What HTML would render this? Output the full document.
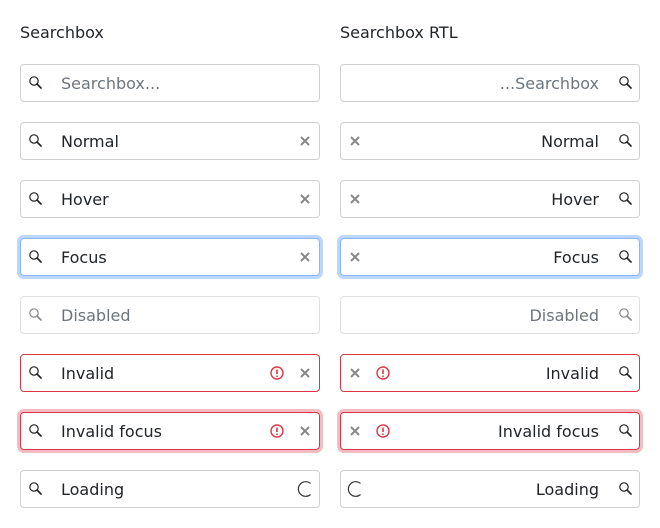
<!DOCTYPE html>
<html><head><meta charset="utf-8"><style>
body{margin:0;width:660px;height:528px;background:#fff;font-family:"DejaVu Sans","Liberation Sans",sans-serif;color:#212529;position:relative;overflow:hidden}
.t{position:absolute;top:23px;font-size:16px;line-height:20px}
.b{position:absolute;width:298px;height:36px;border:1px solid #ced0d4;border-radius:4px;box-sizing:content-box}
.b span.tx{position:absolute;top:1px;line-height:36px;font-size:16px}
.l .tx{left:40px}.r .tx{right:40px}
.ph{color:#6c757d}
.dis{color:#6c757d}.dis.b{border-color:#dde0e3}
.foc{border-color:#86b7fe;box-shadow:0 0 0 3px #bcd6fd}
.inv{border-color:#dc3545}
.invf{border-color:#dc3545;box-shadow:0 0 0 3px #f4bcc2}
svg{position:absolute;top:10px}
</style></head><body>
<div class="t" style="left:20px">Searchbox</div>
<div class="t" style="left:340px">Searchbox RTL</div>

<svg width="0" height="0" style="position:absolute">
<defs>
<g id="s"><circle cx="6" cy="6" r="4.2" fill="none" stroke="#222" stroke-width="1.2"/><path d="M9 9l4 4" stroke="#222" stroke-width="1.6" stroke-linecap="round"/></g>
<g id="sd"><circle cx="6" cy="6" r="4.2" fill="none" stroke="#888" stroke-width="1.2"/><path d="M9 9l4 4" stroke="#888" stroke-width="1.6" stroke-linecap="round"/></g>
<g id="x"><path d="M3 3l8 8M11 3l-8 8" stroke="#888" stroke-width="2"/></g>
<g id="e"><circle cx="7" cy="7" r="6" fill="none" stroke="#dc3545" stroke-width="1.4"/><path d="M7 3.5v4.5" stroke="#dc3545" stroke-width="1.6"/><circle cx="7" cy="10.3" r="0.9" fill="#dc3545"/></g>
<g id="sp"><path d="M14.5 3.5A7.3 7.3 0 1 0 14.5 14.5" fill="none" stroke="#333" stroke-width="1.2"/></g>
</defs></svg>

<!-- left column -->
<div class="b l" style="left:20px;top:64px"><svg width="14" height="14" style="left:7px"><use href="#s"/></svg><span class="tx ph">Searchbox...</span></div>
<div class="b l" style="left:20px;top:122px"><svg width="14" height="14" style="left:7px"><use href="#s"/></svg><span class="tx">Normal</span><svg width="14" height="14" style="left:277px;top:11px"><use href="#x"/></svg></div>
<div class="b l" style="left:20px;top:180px"><svg width="14" height="14" style="left:7px"><use href="#s"/></svg><span class="tx">Hover</span><svg width="14" height="14" style="left:277px;top:11px"><use href="#x"/></svg></div>
<div class="b l foc" style="left:20px;top:238px"><svg width="14" height="14" style="left:7px"><use href="#s"/></svg><span class="tx">Focus</span><svg width="14" height="14" style="left:277px;top:11px"><use href="#x"/></svg></div>
<div class="b l dis" style="left:20px;top:296px"><svg width="14" height="14" style="left:7px"><use href="#sd"/></svg><span class="tx">Disabled</span></div>
<div class="b l inv" style="left:20px;top:354px"><svg width="14" height="14" style="left:7px"><use href="#s"/></svg><span class="tx">Invalid</span><svg width="14" height="14" style="left:249px;top:11px"><use href="#e"/></svg><svg width="14" height="14" style="left:277px;top:11px"><use href="#x"/></svg></div>
<div class="b l invf" style="left:20px;top:412px"><svg width="14" height="14" style="left:7px"><use href="#s"/></svg><span class="tx">Invalid focus</span><svg width="14" height="14" style="left:249px;top:11px"><use href="#e"/></svg><svg width="14" height="14" style="left:277px;top:11px"><use href="#x"/></svg></div>
<div class="b l" style="left:20px;top:470px"><svg width="18" height="18" style="left:275px;top:9px"><use href="#sp"/></svg><svg width="14" height="14" style="left:7px"><use href="#s"/></svg><span class="tx">Loading</span></div>

<!-- right column -->
<div class="b r" style="left:340px;top:64px"><svg width="14" height="14" style="left:277px"><use href="#s"/></svg><span class="tx ph">...Searchbox</span></div>
<div class="b r" style="left:340px;top:122px"><svg width="14" height="14" style="left:277px"><use href="#s"/></svg><span class="tx">Normal</span><svg width="14" height="14" style="left:7px;top:11px"><use href="#x"/></svg></div>
<div class="b r" style="left:340px;top:180px"><svg width="14" height="14" style="left:277px"><use href="#s"/></svg><span class="tx">Hover</span><svg width="14" height="14" style="left:7px;top:11px"><use href="#x"/></svg></div>
<div class="b r foc" style="left:340px;top:238px"><svg width="14" height="14" style="left:277px"><use href="#s"/></svg><span class="tx">Focus</span><svg width="14" height="14" style="left:7px;top:11px"><use href="#x"/></svg></div>
<div class="b r dis" style="left:340px;top:296px"><svg width="14" height="14" style="left:277px"><use href="#sd"/></svg><span class="tx">Disabled</span></div>
<div class="b r inv" style="left:340px;top:354px"><svg width="14" height="14" style="left:277px"><use href="#s"/></svg><span class="tx">Invalid</span><svg width="14" height="14" style="left:7px;top:11px"><use href="#x"/></svg><svg width="14" height="14" style="left:35px;top:11px"><use href="#e"/></svg></div>
<div class="b r invf" style="left:340px;top:412px"><svg width="14" height="14" style="left:277px"><use href="#s"/></svg><span class="tx">Invalid focus</span><svg width="14" height="14" style="left:7px;top:11px"><use href="#x"/></svg><svg width="14" height="14" style="left:35px;top:11px"><use href="#e"/></svg></div>
<div class="b r" style="left:340px;top:470px"><svg width="18" height="18" style="left:5px;top:9px"><use href="#sp"/></svg><svg width="14" height="14" style="left:277px"><use href="#s"/></svg><span class="tx">Loading</span></div>
</body></html>
